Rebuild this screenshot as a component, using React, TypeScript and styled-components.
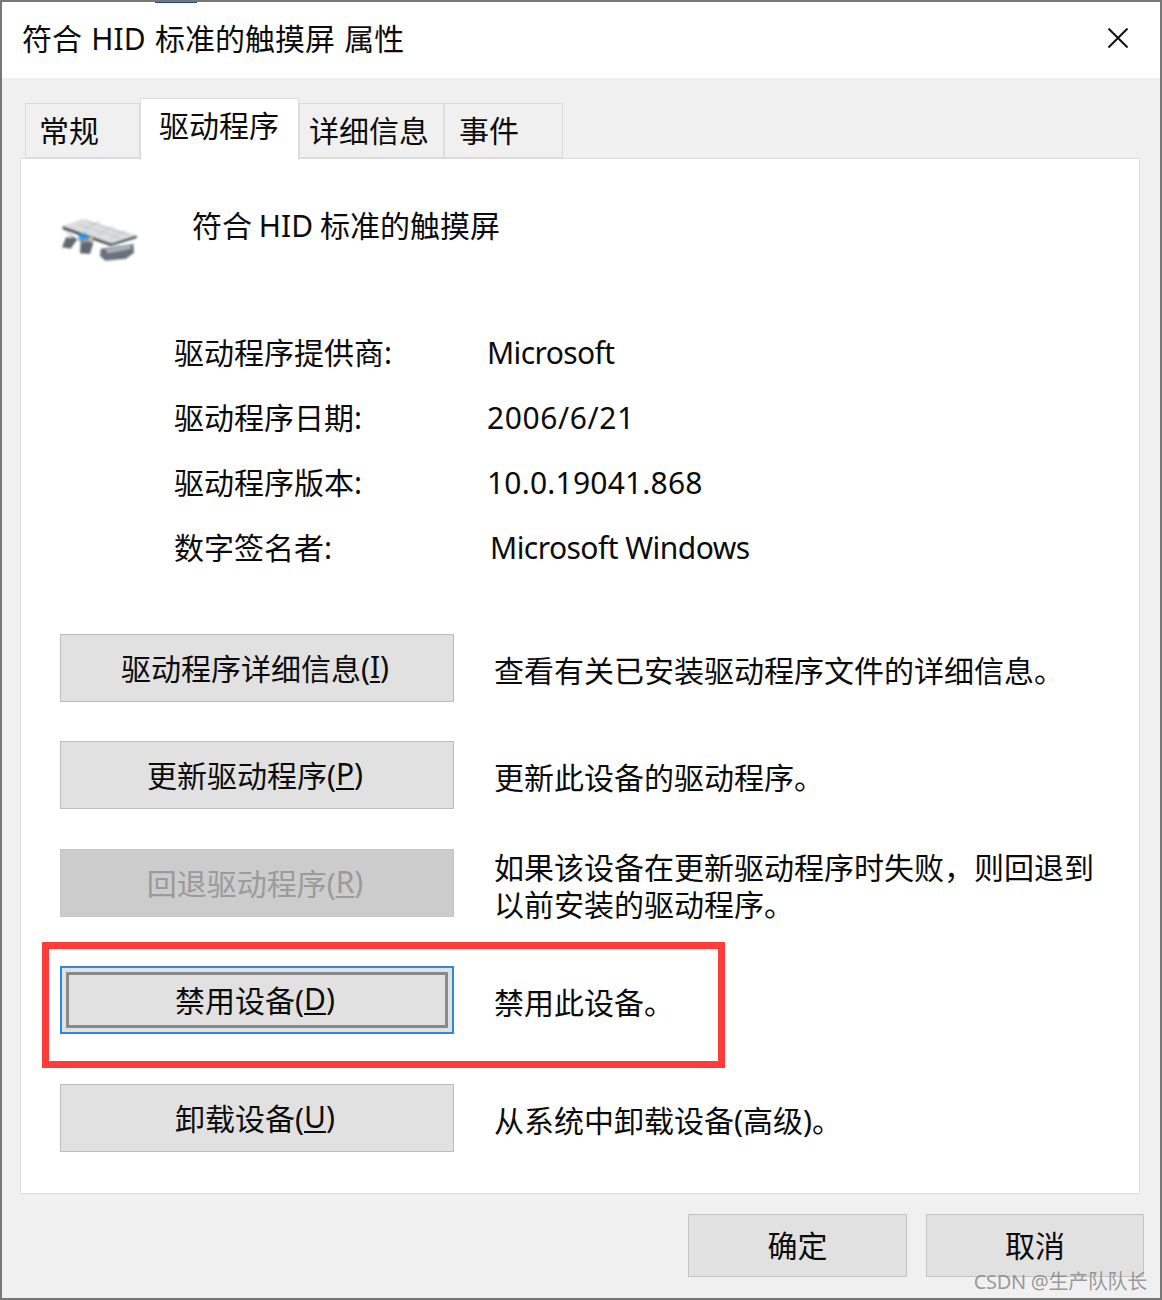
import { ReactNode } from "react";
import styled, { createGlobalStyle } from "styled-components";

const GlobalStyle = createGlobalStyle`
	html, body {
		margin: 0;
		padding: 0;
		background: #fff;
	}
	body {
		font-family: "Noto Sans", "Noto Sans CJK SC", sans-serif;
		font-size: 30px;
		color: #0c0c0c;
	}
`;

const tabs = ["常规", "驱动程序", "详细信息", "事件"];
const tabWidths = [115, 159, 145, 119];
const tabInsets = [13, 18, 9, 14];

const infoRows = [
	{ label: "驱动程序提供商:", value: "Microsoft", spacing: -0.6, nudge: 0 },
	{ label: "驱动程序日期:", value: "2006/6/21", spacing: 0.6, nudge: 0 },
	{ label: "驱动程序版本:", value: "10.0.19041.868", spacing: 0.2, nudge: 0 },
	{ label: "数字签名者:", value: "Microsoft Windows", spacing: -0.55, nudge: 3 },
];

type ActionRowData = {
	label: string;
	accessKey: string;
	description: ReactNode;
	gap: number;
	disabled?: boolean;
	focused?: boolean;
};

const actions: ActionRowData[] = [
	{ label: "驱动程序详细信息", accessKey: "I", description: "查看有关已安装驱动程序文件的详细信息。", gap: 0 },
	{ label: "更新驱动程序", accessKey: "P", description: "更新此设备的驱动程序。", gap: 39 },
	{
		label: "回退驱动程序",
		accessKey: "R",
		description: (
			<>
				如果该设备在更新驱动程序时失败，则回退到
				<br />
				以前安装的驱动程序。
			</>
		),
		gap: 40,
		disabled: true,
	},
	{ label: "禁用设备", accessKey: "D", description: "禁用此设备。", gap: 49, focused: true },
	{ label: "卸载设备", accessKey: "U", description: "从系统中卸载设备(高级)。", gap: 50 },
];

const DeviceIcon = () => (
	<IconSvg viewBox="60 30 240 180" aria-hidden="true">
		<defs>
			<filter id="soft" x="-10%" y="-10%" width="120%" height="120%">
				<feGaussianBlur stdDeviation="3.4" />
			</filter>
		</defs>
		<g filter="url(#soft)">
			<path d="M72 92 L100 114 L78 112 L66 142 L92 146 L112 118 Z" fill="#5f6a73" />
			<path d="M122 122 L160 128 L150 162 L120 160 Z" fill="#5d6871" />
			<path d="M110 116 L150 112 L162 126 L124 128 Z" fill="#8b99a4" />
			<path d="M182 146 L280 132 L282 158 L258 176 L196 182 L180 168 Z" fill="#66727b" />
			<path d="M196 148 L270 136 L274 146 L204 160 Z" fill="#aab3ba" />
			<path d="M68 78 L130 56 L290 106 L214 130 Z" fill="#dcdee0" />
			<path d="M68 78 L68 88 L212 138 L290 114 L290 106 L214 130 Z" fill="#454f57" />
			<path d="M112 104 L138 98 L146 114 L122 118 Z" fill="#1f93e8" />
			<path d="M146 110 L160 112 L156 124 L146 122 Z" fill="#d8b98a" />
			<circle cx="228" cy="132" r="4" fill="#3fae5a" />
			<path d="M110 72 L240 114 M140 64 L268 106" stroke="#bfc3c6" strokeWidth="3" fill="none" />
			<path d="M130 92 L180 62 M170 106 L220 78 M210 118 L256 92" stroke="#bfc3c6" strokeWidth="3" fill="none" />
		</g>
	</IconSvg>
);

const App = () => (
	<>
		<GlobalStyle />
		<Window lang="zh-CN">
			<TopAccent />
			<TitleBar>
				<TitleText>符合 HID 标准的触摸屏 属性</TitleText>
				<CloseIcon viewBox="0 0 20 20" aria-hidden="true">
					<path d="M0.5 0.5 L19.5 19.5 M19.5 0.5 L0.5 19.5" stroke="#111" strokeWidth="2" />
				</CloseIcon>
			</TitleBar>
			<Body>
				<TabRow>
					{tabs.map((tab, i) => (
						<Tab key={tab} $active={i === 1} $width={tabWidths[i]} $inset={tabInsets[i]}>
							{tab}
						</Tab>
					))}
				</TabRow>
				<Panel>
					<DeviceHeader>
						<DeviceIcon />
						<DeviceName>符合 HID 标准的触摸屏</DeviceName>
					</DeviceHeader>
					<InfoList>
						{infoRows.map(row => (
							<InfoRow key={row.label}>
								<InfoLabel>{row.label}</InfoLabel>
								<InfoValue $nudge={row.nudge} $spacing={row.spacing}>
									{row.value}
								</InfoValue>
							</InfoRow>
						))}
					</InfoList>
					<ActionList>
						{actions.map(action => (
							<ActionRow key={action.label} $gap={action.gap}>
								<ActionButton $disabled={action.disabled} $focused={action.focused}>
									{action.label}(<AccessKey>{action.accessKey}</AccessKey>)
								</ActionButton>
								<Description>{action.description}</Description>
							</ActionRow>
						))}
					</ActionList>
				</Panel>
				<Footer>
					<FooterButton $width={219}>确定</FooterButton>
					<FooterButton $width={218}>取消</FooterButton>
				</Footer>
			</Body>
			<Highlight />
			<Watermark>CSDN @生产队队长</Watermark>
		</Window>
	</>
);

const Window = styled.div`
	position: relative;
	box-sizing: border-box;
	width: 1162px;
	height: 1300px;
	border: 2px solid #777;
	background: #f0f0f0;
	overflow: hidden;
`;

const TopAccent = styled.div`
	position: absolute;
	top: 0;
	left: 153px;
	width: 42px;
	height: 1px;
	background: #1d4f80;
`;

const TitleBar = styled.div`
	display: flex;
	align-items: center;
	justify-content: space-between;
	box-sizing: border-box;
	height: 76px;
	padding: 0 32px 4px 20px;
	background: #fff;
`;

const TitleText = styled.div`
	margin-top: 2px;
	line-height: 40px;
	white-space: pre;
	word-spacing: 1.5px;
`;

const CloseIcon = styled.svg`
	width: 20px;
	height: 20px;
`;

const Body = styled.div`
	display: flex;
	flex-direction: column;
	padding: 20px 20px 0 18px;
`;

const TabRow = styled.div`
	display: flex;
	align-items: flex-end;
	height: 60px;
	padding-left: 5px;
`;

const Tab = styled.div<{ $active: boolean; $width: number; $inset: number }>`
	position: relative;
	z-index: ${props => (props.$active ? 1 : 0)};
	box-sizing: border-box;
	width: ${props => props.$width}px;
	height: ${props => (props.$active ? 62 : 55)}px;
	margin-bottom: ${props => (props.$active ? -2 : 0)}px;
	padding: 0 0 ${props => (props.$active ? 11 : 4)}px ${props => props.$inset}px;
	display: flex;
	align-items: center;
	background: ${props => (props.$active ? "#fff" : "#f0f0f0")};
	border: 1px solid #dcdcdc;
	border-bottom: ${props => (props.$active ? "none" : "1px solid #dcdcdc")};
`;

const Panel = styled.div`
	box-sizing: border-box;
	height: 1036px;
	padding: 51px 0 0 39px;
	background: #fff;
	border: 1px solid #dcdcdc;
`;

const DeviceHeader = styled.div`
	display: flex;
	align-items: flex-start;
	gap: 52px;
	height: 60px;
`;

const IconSvg = styled.svg`
	width: 80px;
	height: 60px;
	flex: none;
`;

const DeviceName = styled.div`
	margin-top: -4px;
	line-height: 40px;
	word-spacing: -1px;
`;

const InfoList = styled.div`
	margin-top: 50px;
	padding-left: 114px;
`;

const InfoRow = styled.div`
	display: grid;
	grid-template-columns: 313px 1fr;
	align-items: center;
	height: 65px;
`;

const InfoLabel = styled.span`
	padding-bottom: 4px;
`;

const InfoValue = styled.span<{ $nudge: number; $spacing: number }>`
	padding-left: ${props => props.$nudge}px;
	letter-spacing: ${props => props.$spacing}px;
`;

const ActionList = styled.div`
	margin-top: 54px;
`;

const ActionRow = styled.div<{ $gap: number }>`
	display: flex;
	align-items: center;
	gap: 40px;
	height: 68px;
	margin-top: ${props => props.$gap}px;
`;

const ActionButton = styled.div<{ $disabled?: boolean; $focused?: boolean }>`
	position: relative;
	box-sizing: border-box;
	flex: none;
	display: flex;
	align-items: center;
	justify-content: center;
	width: 394px;
	height: 68px;
	padding: 0 4px 3px 0;
	background: ${props => (props.$disabled ? "#cccccc" : "#e1e1e1")};
	color: ${props => (props.$disabled ? "#9b9b9b" : "#0c0c0c")};
	border: ${props => (props.$focused ? "2px solid #2a8bdb" : props.$disabled ? "1px solid #c4c4c4" : "1px solid #bdbdbd")};

	${props =>
		props.$focused &&
		`&::after {
			content: "";
			position: absolute;
			inset: 4px;
			border: 3px solid #8a8a8a;
		}`}
`;

const AccessKey = styled.span`
	text-decoration: underline;
	text-underline-offset: 3px;
	text-decoration-thickness: 2px;
`;

const Description = styled.div`
	padding-top: 5px;
	line-height: 37px;
	white-space: nowrap;
`;

const Footer = styled.div`
	display: flex;
	justify-content: flex-end;
	gap: 19px;
	margin: 20px -4px 0 0;
`;

const FooterButton = styled.div<{ $width: number }>`
	box-sizing: border-box;
	display: flex;
	align-items: center;
	justify-content: center;
	width: ${props => props.$width}px;
	height: 63px;
	padding-bottom: 3px;
	background: #e1e1e1;
	border: 1px solid #c4c4c4;
`;

const Highlight = styled.div`
	position: absolute;
	left: 40px;
	top: 940px;
	box-sizing: border-box;
	width: 683px;
	height: 126px;
	border: 7px solid #ff3b3b;
`;

const Watermark = styled.div`
	position: absolute;
	right: 13px;
	bottom: 3px;
	font-size: 20px;
	line-height: 26px;
	letter-spacing: -0.3px;
	color: rgba(130, 130, 130, 0.8);
`;

export default App;
